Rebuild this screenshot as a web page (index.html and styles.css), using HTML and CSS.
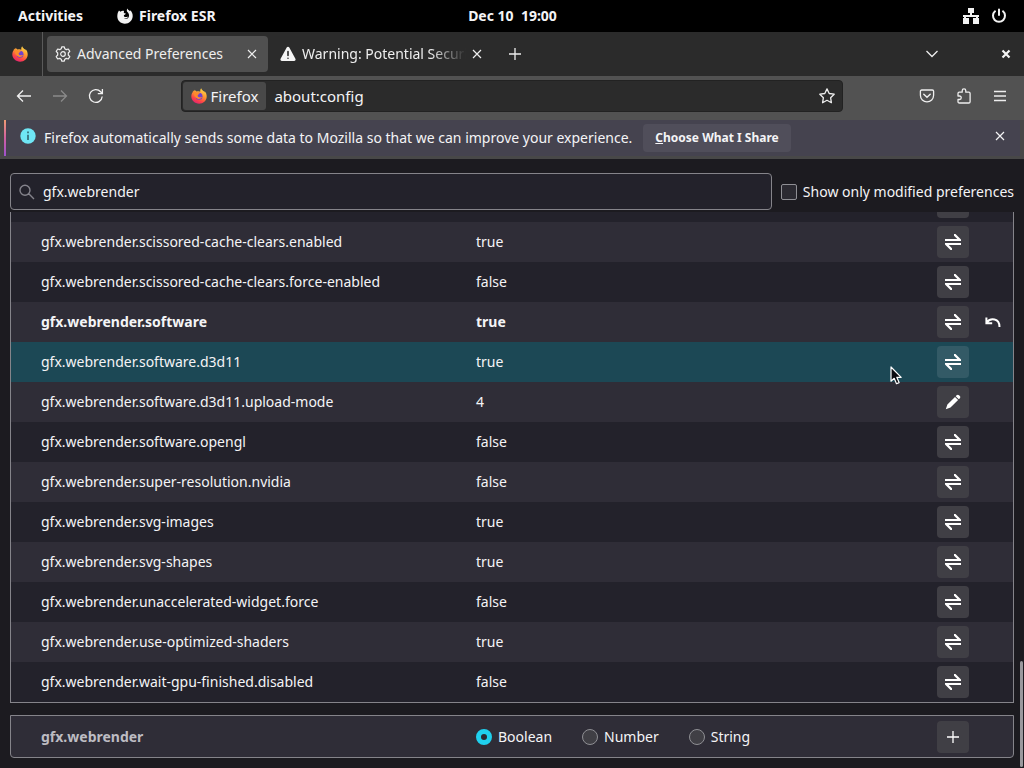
FILE: index.html
```html
<!DOCTYPE html>
<html lang="en">
<head>
<meta charset="utf-8" />
<title>Advanced Preferences</title>
<link rel="stylesheet" href="styles.css">
</head>

<body>
<svg class="defs" aria-hidden="true">
	<defs>
		<linearGradient id="flame" x1="0.8" y1="0" x2="0.3" y2="1">
			<stop offset="0" stop-color="#ffe14a"/>
			<stop offset="0.45" stop-color="#ff9330"/>
			<stop offset="0.75" stop-color="#ff4447"/>
			<stop offset="1" stop-color="#e02273"/>
		</linearGradient>
	</defs>
	<symbol id="firefox" viewBox="0 0 16 16">
		<path fill="url(#flame)" d="M10.200.3c.3 1.200 1.200 1.900 2 2.700 1 .4 1.300.8 1.700 1.400-.1-.7-.2-1-.4-1.400 1.500 1.500 2.300 3.500 2.200 5.800-.2 4-3.500 6.900-7.600 6.900C3.800 15.700.4 12.600.3 8.600c0-1.800.5-3.300 1.500-4.600L2 2.400l1 1 .7-1.600c.5.800 1.100 1.300 1.900 1.800 1.600-.7 3-.4 3.700.100-.2-1.400.1-2.500.9-3.400z"/>
		<circle cx="8" cy="8.200" r="3.500" fill="#7142cf"/>
		<path fill="#ff8a2c" d="M2.800 4.300c1.200-.5 2.400-.4 3.400.2l2.500.6c-.2 1.300-1.700 1.300-2 2.200-.2.800.4 1.700 1.500 1.900 1.200.2 1.900-.5 2.800-.1-.6 1.500-2.500 2.300-4.300 1.700C3.900 9.900 2.400 7 2.800 4.300z"/>
	</symbol>
	<symbol id="toggle" viewBox="0 0 16 16">
		<path fill="currentColor" d="M0 5h12.300L9 1.700V0h1.500L16 5.400V7H0zM16 11H3.700L7 14.300V16H5.500L0 10.600V9h16z"/>
	</symbol>
	<symbol id="close" viewBox="0 0 10 10">
		<path fill="none" stroke="currentColor" stroke-width="1.200" d="M1 1l8 8M9 1L1 9"/>
	</symbol>
	<symbol id="plus" viewBox="0 0 12 12">
		<path fill="none" stroke="currentColor" stroke-width="1.300" d="M6 0v12M0 6h12"/>
	</symbol>
</svg>

<header class="panel">
	<div class="panel-left">
		<button class="bare">Activities</button>
		<button class="bare app">
			<svg width="16" height="16" viewBox="0 0 16 16"><path fill="#f2f2f2" d="M2 2.500l1.500 1.200C4.500 2.800 6 2.600 7 3L6.800 5l2 .5c-.2 1.200-1.900 1.200-2 2.200 0 .9 1 1.300 1.800 1.300 1 0 1.500-.5 2.400-.2-.6 1.400-2.500 2-4 1.200C8.600 11.600 11.500 11 12 8c.2-1.700-.5-3-1.600-4C9.500 3 9.700 1.500 10.500.5c.3 1.400 1.500 1.800 2.500 2.700l.3-1c1.600 1.500 2.500 3.500 2.400 6-.2 4.200-3.600 7.500-7.800 7.500C3.600 15.700.3 12.400.3 8.300.3 6 .9 4 2 2.500z"/></svg>
			Firefox ESR
		</button>
	</div>
	<button class="bare clock">Dec 10&nbsp; 19:00</button>
	<div class="panel-right">
		<svg width="16" height="16" viewBox="0 0 16 16"><path fill="#f2f2f2" d="M5 0h6v5H9v2h7v2h-1v1h1v6h-6v-6h3V9H3v1h3v6H0v-6h1V9H0V7h7V5H5z"/></svg>
		<svg width="16" height="16" viewBox="0 0 16 16"><path fill="none" stroke="#f2f2f2" stroke-width="2" stroke-linecap="round" d="M4 3.300a6 6 0 1 0 8 0M8 1.500V7"/></svg>
	</div>
</header>

<nav class="tabs">
	<button class="view" aria-label="Firefox View"><svg width="16" height="16"><use href="#firefox"/></svg></button>
	<div class="tab active">
		<svg width="16" height="16" viewBox="0 0 16 16" fill="none" stroke="#eee"><path stroke-width="1.200" stroke-linejoin="round" d="M6.700.8h2.600l.5 2 1.500.8 2-.6 1.500 2.400L13.300 7v2l1.500 1.600-1.500 2.400-2-.6-1.500.8-.5 2H6.700l-.5-2-1.500-.8-2 .6-1.500-2.400L2.700 9V7L1.200 5.400 2.700 3l2 .6 1.500-.8z"/><circle cx="8" cy="8" r="2.300" stroke-width="1.200"/></svg>
		<span class="title">Advanced Preferences</span>
		<button class="bare" aria-label="Close tab"><svg width="10" height="10"><use href="#close"/></svg></button>
	</div>
	<div class="tab">
		<svg width="16" height="16" viewBox="0 0 16 16"><path fill="#f5f5f5" d="M6.700 1.500c.6-1.100 2-1.100 2.600 0l6.100 11.300c.6 1-.1 2.200-1.300 2.200H1.900C.7 15 0 13.800.6 12.800z"/><path stroke="#2b2b2b" stroke-width="1.600" stroke-linecap="round" d="M8 5.500v4M8 12.200v.1"/></svg>
		<span class="title fade">Warning: Potential Securi</span>
		<button class="bare" aria-label="Close tab"><svg width="10" height="10"><use href="#close"/></svg></button>
	</div>
	<button class="bare new" aria-label="New tab"><svg width="12" height="12"><use href="#plus"/></svg></button>
	<div class="tabs-end">
		<button class="bare" aria-label="List all tabs"><svg width="12" height="8" viewBox="0 0 12 8"><path fill="none" stroke="#eee" stroke-width="1.300" d="M.5 1L6 6.500 11.500 1"/></svg></button>
		<button class="bare" aria-label="Close window"><svg width="10" height="10" viewBox="0 0 10 10"><path stroke="#f5f5f5" stroke-width="2.200" d="M1.500 1.500l7 7M8.500 1.500l-7 7"/></svg></button>
	</div>
</nav>

<div class="toolbar">
	<div class="nav-buttons">
		<button class="bare" aria-label="Back"><svg width="16" height="16" viewBox="0 0 16 16"><path fill="none" stroke="#f0f0f0" stroke-width="1.300" d="M15 8H1.500M7 2.500L1.500 8 7 13.500"/></svg></button>
		<button class="bare" aria-label="Forward"><svg width="16" height="16" viewBox="0 0 16 16"><path fill="none" stroke="#8a8a8a" stroke-width="1.300" d="M1 8h13.500M9 2.500L14.500 8 9 13.500"/></svg></button>
		<button class="bare" aria-label="Reload"><svg width="16" height="16" viewBox="0 0 16 16"><path fill="none" stroke="#f0f0f0" stroke-width="1.300" d="M14.200 8.500A6.400 6.400 0 1 1 12.600 3.700L14.300 5.500M14.400 1v4.600H9.800"/></svg></button>
	</div>
	<div class="urlbar">
		<button class="identity"><svg width="16" height="16"><use href="#firefox"/></svg>Firefox</button>
		<input class="url" type="text" value="about:config" aria-label="Address">
		<button class="bare star" aria-label="Bookmark"><svg width="16" height="16" viewBox="0 0 16 16"><path fill="none" stroke="#eee" stroke-width="1.300" stroke-linejoin="round" d="M8 .9l2.200 4.600 5 .7-3.600 3.500.8 5L8 12.300l-4.400 2.400.8-5L.8 6.200l5-.7z"/></svg></button>
	</div>
	<div class="tools">
		<button class="bare" aria-label="Pocket"><svg width="16" height="16" viewBox="0 0 16 16"><path fill="none" stroke="#eee" stroke-width="1.300" stroke-linejoin="round" d="M2.700 2h10.600c.8 0 1.300.5 1.300 1.300v4c0 3.700-2.900 6.500-6.600 6.500S1.400 11 1.400 7.300v-4C1.400 2.500 1.900 2 2.700 2z"/><path fill="none" stroke="#eee" stroke-width="1.500" stroke-linecap="round" d="M4.800 6.300L8 9.200l3.200-2.900"/></svg></button>
		<button class="bare" aria-label="Extensions"><svg width="16" height="16" viewBox="0 0 16 16"><path fill="none" stroke="#eee" stroke-width="1.300" stroke-linejoin="round" d="M2 8V5.500c0-.8.500-1.300 1.300-1.300h2.900V2.700a1.800 1.800 0 0 1 3.600 0v1.500h3c.8 0 1.300.5 1.300 1.300v8.200c0 .8-.5 1.300-1.300 1.300H3.300c-.8 0-1.300-.5-1.300-1.300v-2.200h1.500a1.700 1.700 0 0 0 0-3.500z"/></svg></button>
		<button class="bare" aria-label="Menu"><svg width="14" height="12" viewBox="0 0 14 12"><path stroke="#eee" stroke-width="1.300" d="M1 1.500h12M1 6h12M1 10.500h12"/></svg></button>
	</div>
</div>

<div class="notice-wrap">
	<div class="notice">
		<svg class="info" width="16" height="16" viewBox="0 0 16 16"><circle cx="8" cy="8" r="7.700" fill="#6fe6f5"/><path stroke="#2b5a66" stroke-width="1.500" d="M8 3.500v1.700M8 6.800V12"/></svg>
		<span>Firefox automatically sends some data to Mozilla so that we can improve your experience.</span>
		<button class="choose"><u>C</u>hoose What I Share</button>
		<button class="bare dismiss" aria-label="Dismiss"><svg width="10" height="10"><use href="#close"/></svg></button>
	</div>
</div>

<main class="config">
	<div class="search-row">
		<div class="search">
			<svg width="16" height="16" viewBox="0 0 16 16"><path fill="none" stroke="#84838b" stroke-width="1.400" d="M9.800 9.800L15 15M11 6.200A5 5 0 1 1 1 6.200a5 5 0 0 1 10 0z"/></svg>
			<input type="text" value="gfx.webrender" aria-label="Search preference name">
		</div>
		<label class="modified"><input type="checkbox">Show only modified preferences</label>
	</div>

	<div class="prefs">
		<table>
			<colgroup><col class="c-name"><col><col class="c-btn"><col class="c-btn"></colgroup>
			<tbody>
			<tr><th scope="row"></th><td></td><td><button class="act" aria-label="Toggle"><svg width="16" height="16"><use href="#toggle"/></svg></button></td><td></td></tr>
			<tr><th scope="row">gfx.webrender.scissored-cache-clears.enabled</th><td>true</td><td><button class="act" aria-label="Toggle"><svg width="16" height="16"><use href="#toggle"/></svg></button></td><td></td></tr>
			<tr><th scope="row">gfx.webrender.scissored-cache-clears.force-enabled</th><td>false</td><td><button class="act" aria-label="Toggle"><svg width="16" height="16"><use href="#toggle"/></svg></button></td><td></td></tr>
			<tr class="changed"><th scope="row">gfx.webrender.software</th><td>true</td><td><button class="act" aria-label="Toggle"><svg width="16" height="16"><use href="#toggle"/></svg></button></td><td><button class="act reset" aria-label="Reset"><svg width="16" height="16" viewBox="0 0 16 16"><path fill="none" stroke="currentColor" stroke-width="2" d="M2 8.200C5.500 3.700 14.500 4 14.500 13M1.400 3.500v5.700h5.800"/></svg></button></td></tr>
			<tr class="hover"><th scope="row">gfx.webrender.software.d3d11</th><td>true</td><td><button class="act" aria-label="Toggle"><svg width="16" height="16"><use href="#toggle"/></svg></button></td><td></td></tr>
			<tr><th scope="row">gfx.webrender.software.d3d11.upload-mode</th><td>4</td><td><button class="act" aria-label="Edit"><svg width="16" height="16" viewBox="0 0 16 16"><path fill="currentColor" d="M11.600 1.300c.8-.8 1.700-.8 2.400-.1l.8.8c.7.700.7 1.600-.1 2.400l-.9.9-3.100-3.100zM10 2.900L13.100 6l-7.600 7.600-4.700 1.600 1.600-4.700z"/></svg></button></td><td></td></tr>
			<tr><th scope="row">gfx.webrender.software.opengl</th><td>false</td><td><button class="act" aria-label="Toggle"><svg width="16" height="16"><use href="#toggle"/></svg></button></td><td></td></tr>
			<tr><th scope="row">gfx.webrender.super-resolution.nvidia</th><td>false</td><td><button class="act" aria-label="Toggle"><svg width="16" height="16"><use href="#toggle"/></svg></button></td><td></td></tr>
			<tr><th scope="row">gfx.webrender.svg-images</th><td>true</td><td><button class="act" aria-label="Toggle"><svg width="16" height="16"><use href="#toggle"/></svg></button></td><td></td></tr>
			<tr><th scope="row">gfx.webrender.svg-shapes</th><td>true</td><td><button class="act" aria-label="Toggle"><svg width="16" height="16"><use href="#toggle"/></svg></button></td><td></td></tr>
			<tr><th scope="row">gfx.webrender.unaccelerated-widget.force</th><td>false</td><td><button class="act" aria-label="Toggle"><svg width="16" height="16"><use href="#toggle"/></svg></button></td><td></td></tr>
			<tr><th scope="row">gfx.webrender.use-optimized-shaders</th><td>true</td><td><button class="act" aria-label="Toggle"><svg width="16" height="16"><use href="#toggle"/></svg></button></td><td></td></tr>
			<tr><th scope="row">gfx.webrender.wait-gpu-finished.disabled</th><td>false</td><td><button class="act" aria-label="Toggle"><svg width="16" height="16"><use href="#toggle"/></svg></button></td><td></td></tr>
			</tbody>
		</table>
	</div>

	<form class="add">
		<span class="add-name">gfx.webrender</span>
		<div class="types">
			<label><input type="radio" name="type" checked>Boolean</label>
			<label><input type="radio" name="type">Number</label>
			<label><input type="radio" name="type">String</label>
		</div>
		<button class="act" type="button" aria-label="Add"><svg width="12" height="12"><use href="#plus"/></svg></button>
	</form>
</main>

<div class="thumb"></div>
<svg class="pointer" width="12" height="19" viewBox="0 0 12 19"><path fill="#0b0b10" stroke="#fff" stroke-width="1.200" stroke-linejoin="round" d="M1 1v14.200l3.200-2.900 2.300 5.400 2.600-1.100-2.300-5.300h4.400z"/></svg>
</body>
</html>
```
FILE: styles.css
```css
*{margin:0; padding:0; box-sizing:border-box;}
body{height:100vh; display:flex; flex-direction:column; overflow:hidden; background:#1c1b20; color:#f4f4f6; font:14px/20px "Noto Sans","Open Sans",sans-serif;}
button,input{font:inherit; color:inherit;}
svg{display:block; flex:none;}
.defs{position:absolute; width:0; height:0;}
.bare{background:none; border:0; display:flex; align-items:center;}

/* desktop panel */
.panel{height:32px; background:#000; display:grid; grid-template-columns:1fr auto 1fr; align-items:center; padding:0 17px 0 18px; font-weight:bold;}
.panel-left{display:flex; gap:34px;}
.panel-right{display:flex; gap:12px; justify-content:flex-end;}
.app{gap:6px;}

/* tab strip */
.tabs{height:44px; background:#2b2b2b; display:flex; align-items:center; color:#eee;}
.view{width:43px; height:44px; padding-left:12px; background:none; border:0; border-right:1px solid #5a5a5a; margin-right:4px;}
.tab{width:221px; height:36px; display:flex; align-items:center; gap:6px; padding:0 11px 0 8px; border-radius:4px;}
.tab.active{background:#505050;}
.tab + .tab{width:225px; padding-left:12px;}
.title{flex:1; min-width:0; white-space:nowrap;}
.fade{-webkit-mask-image:linear-gradient(to left,transparent,#000 36px); mask-image:linear-gradient(to left,transparent,#000 36px);}
.new{margin-left:16px;}
.tabs-end{margin-left:auto; padding-right:13px; display:flex; gap:63px;}

/* toolbar */
.toolbar{height:44px; background:#525252; display:flex; align-items:center; justify-content:space-between; padding:0 17px 4px 16px;}
.nav-buttons{display:flex; gap:20px;}
.urlbar{width:67%; max-width:662px; height:32px; display:flex; align-items:center; background:#2b2b2b; border:1px solid #222; border-radius:4px; font-size:15px;}
.identity{height:28px; display:flex; align-items:center; gap:4px; padding:0 8px; margin-left:1px; background:#494949; border:0; border-radius:3px;}
.url{flex:1; min-width:0; padding-left:8px; background:none; border:0; outline:0;}
.star{padding:0 7px;}
.tools{display:flex; align-items:center; gap:21px;}

/* data notice */
.notice-wrap{background:#484848; padding:0 4px 3px;}
.notice{height:36px; display:flex; align-items:center; background:#45434f; border-left:2px solid; border-image:linear-gradient(#f0a070,#d060a0,#9a50d0) 1; padding:0 15px 0 14px;}
.info,.dismiss{align-self:flex-start; margin-top:8px;}
.info{margin-right:8px;}
.choose{height:28px; padding:0 12px; margin-left:11px; background:#504e5a; border:0; border-radius:4px; font-weight:bold; font-size:12px;}
.dismiss{height:16px; margin-left:auto;}

/* about:config */
.config{flex:1; min-height:0; display:flex; flex-direction:column; padding:14px 10px 10px;}
.search-row{display:flex; align-items:center; gap:9px;}
.search{flex:1; height:37px; display:flex; align-items:center; gap:8px; padding:0 8px; background:#23222b; border:1px solid #85848a; border-radius:4px;}
.search input{flex:1; min-width:0; background:none; border:0; outline:0;}
.modified{display:flex; align-items:center; gap:6px; white-space:nowrap;}
.modified input{appearance:none; width:16px; height:16px; background:#2b2a31; border:1px solid #8f8f94; border-radius:2px;}
.prefs{flex:1; min-height:0; margin-top:2px; overflow:hidden; display:flex; flex-direction:column; justify-content:flex-end; border:1px solid #85848a; border-top:0;}
table{width:100%; table-layout:fixed; border-collapse:collapse; flex:none;}
.c-name{width:465px;}
.c-btn{width:40px;}
tr{height:40px; background:#23222b;}
tr:nth-child(even){background:#2f2d37;}
tr.hover{background:#1c4855;}
th{text-align:left; font-weight:normal; padding-left:30px;}
.changed th,.changed td{font-weight:bold;}
.act{width:32px; height:32px; display:flex; align-items:center; justify-content:center; margin:0 auto; background:#403f45; border:0; border-radius:4px; color:#fff;}
.hover .act{background:#335a66;}
.reset{background:none;}
.add{height:43px; margin-top:12px; display:flex; align-items:center; padding-right:44px; background:#2f2d37; border:1px solid #85848a; border-radius:0 0 4px 4px;}
.add-name{width:465px; padding-left:30px; font-weight:bold; color:#bdbcc2;}
.types{display:flex; flex:1; gap:30px;}
.types label{display:flex; align-items:center; gap:6px;}
.types input{appearance:none; width:16px; height:16px; border:1px solid #8f8f94; border-radius:50%; background:#403f45;}
.types input:checked{border:5px solid #1fd0ee; background:#2b2a33;}

.thumb{position:absolute; right:1px; bottom:1px; width:3px; height:106px; background:#9a999d; border-radius:2px;}
.pointer{position:absolute; left:890px; top:366px;}
```
